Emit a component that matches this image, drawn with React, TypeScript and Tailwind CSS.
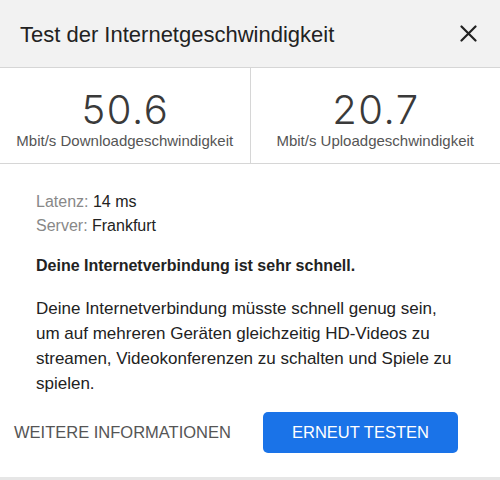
import React from "react";

export default function App() {
  return (
    <div
      className="w-[500px] h-[480px] bg-white flex flex-col text-[#222]"
      style={{ fontFamily: '"Liberation Sans", Arial, sans-serif' }}
    >
      <div className="h-[68px] bg-[#f2f2f2] border-b border-[#d6d6d6] flex items-center justify-between pl-5 pr-[23px]">
        <span className="text-[22px] text-[#222] pt-[1px]">Test der Internetgeschwindigkeit</span>
        <svg width="17" height="17" viewBox="0 0 17 17" className="text-[#222]">
          <path d="M1.5 1.5 L15.5 15.5 M15.5 1.5 L1.5 15.5" stroke="currentColor" strokeWidth="2.2" strokeLinecap="round" />
        </svg>
      </div>
      <div className="h-[96px] border-b border-[#d6d6d6] flex">
        <div className="flex-1 flex flex-col items-center justify-center border-r border-[#d6d6d6] pt-[4px]">
          <span
            className="block text-[40px] leading-[46px] text-[#3a3a3a] font-light tracking-[1.5px] pl-[1.5px]"
            style={{ fontFamily: 'Inter, "Liberation Sans", sans-serif' }}
          >
            50.6
          </span>
          <span className="block text-[15px] leading-[16px] text-[#555]">Mbit/s Downloadgeschwindigkeit</span>
        </div>
        <div className="flex-1 flex flex-col items-center justify-center pt-[4px]">
          <span
            className="block text-[40px] leading-[46px] text-[#3a3a3a] font-light tracking-[1.5px] pl-[1.5px]"
            style={{ fontFamily: 'Inter, "Liberation Sans", sans-serif' }}
          >
            20.7
          </span>
          <span className="block text-[15px] leading-[16px] text-[#555]">Mbit/s Uploadgeschwindigkeit</span>
        </div>
      </div>
      <div className="flex-1 px-9 pt-[26px] flex flex-col">
        <div className="text-[16px] leading-[24px]">
          <div>
            <span className="text-[#888]">Latenz: </span>
            <span>14 ms</span>
          </div>
          <div>
            <span className="text-[#888]">Server: </span>
            <span>Frankfurt</span>
          </div>
        </div>
        <div className="mt-[16px] text-[16px] leading-[24px] font-bold text-[#222]">
          Deine Internetverbindung ist sehr schnell.
        </div>
        <p className="mt-[18px] text-[17px] leading-[25px] text-[#222] pr-3">
          Deine Internetverbindung müsste schnell genug sein, um auf mehreren Geräten gleichzeitig HD-Videos zu streamen, Videokonferenzen zu schalten und Spiele zu spielen.
        </p>
      </div>
      <div className="flex items-center pl-[14px] pb-[24px]">
        <span className="text-[16.5px] text-[#555] w-[249px]">WEITERE INFORMATIONEN</span>
        <button className="w-[195px] h-[41px] rounded-[5px] bg-[#1a73e8] text-white text-[16.5px]">
          ERNEUT TESTEN
        </button>
      </div>
      <div className="h-[3px] bg-[#e6e6e6]" />
    </div>
  );
}
